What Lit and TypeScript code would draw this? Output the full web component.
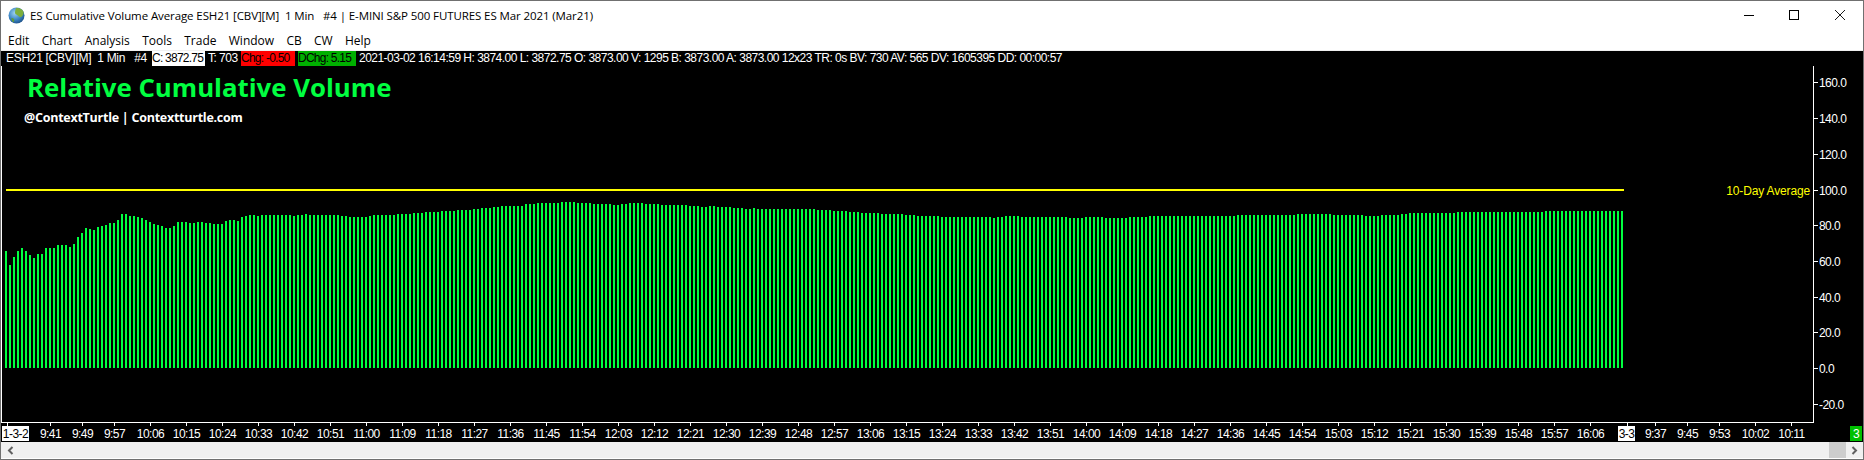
import { LitElement, css, html, svg } from "lit";
import { customElement } from "lit/decorators.js";

// tops of the first 93 bars, page pixels
const HEAD = [
  251, 265, 257, 251, 248, 251, 255, 258, 254, 254, 248, 248, 248, 245, 245, 245, 247, 244, 237, 233,
  228, 229, 230, 227, 226, 225, 223, 223, 220, 214, 214, 216, 216, 217, 218, 220, 222, 224, 225, 226,
  228, 228, 226, 222, 222, 222, 223, 223, 222, 222, 223, 223, 224, 224, 224, 221, 220, 220, 221, 217,
  216, 215, 215, 216, 215, 215, 215, 215, 215, 215, 215, 215, 216, 215, 215, 214, 215, 215, 215, 215,
  215, 215, 215, 215, 216, 216, 217, 217, 217, 217, 217, 216, 215,
];

// [bar x below which, top] for everything after HEAD
const RUNS: [number, number][] = [
  [395, 215], [410, 214], [425, 213], [440, 212], [455, 211], [470, 210], [480, 209], [490, 208],
  [500, 207], [524, 206], [536, 204], [560, 203], [576, 202], [590, 203], [613, 204], [620, 205],
  [627, 204], [644, 203], [660, 204], [687, 205], [700, 206], [708, 207], [716, 206], [733, 207],
  [743, 208], [751, 209], [755, 208], [815, 209], [831, 210], [848, 211], [861, 212], [881, 213],
  [904, 214], [917, 215], [940, 216], [992, 217], [996, 218], [1005, 217], [1019, 216], [1068, 217],
  [1084, 218], [1104, 217], [1127, 218], [1147, 217], [1235, 216], [1294, 215], [1333, 214],
  [1363, 215], [1380, 216], [1400, 215], [1409, 214], [1455, 213], [1544, 212], [1630, 211],
];

const BAR_BOTTOM = 368;
const BAR_COUNT = 405;

const barTop = (i: number, x: number) =>
  i < HEAD.length ? HEAD[i] : RUNS.find((r) => x < r[0])![1];

const Y_LABELS = [160, 140, 120, 100, 80, 60, 40, 20, 0, -20];
const yOf = (v: number) => 368 - (v / 20) * 35.7;

function timeLabels() {
  const out: { x: number; t: string }[] = [
    { x: 50, t: "9:41" },
    { x: 82, t: "9:49" },
    { x: 114, t: "9:57" },
  ];
  for (let k = 0; k <= 40; k++) {
    const m = 10 * 60 + 6 + k * 9;
    out.push({ x: 150 + k * 36, t: `${Math.floor(m / 60)}:${String(m % 60).padStart(2, "0")}` });
  }
  out.push(
    { x: 1655, t: "9:37" },
    { x: 1687, t: "9:45" },
    { x: 1719, t: "9:53" },
    { x: 1755, t: "10:02" },
    { x: 1791, t: "10:11" }
  );
  return out;
}

const MENU = ["Edit", "Chart", "Analysis", "Tools", "Trade", "Window", "CB", "CW", "Help"];

@customElement("app-root")
export class AppRoot extends LitElement {
  static styles = css`
    :host {
      display: block;
      width: 1864px;
      height: 460px;
      box-sizing: border-box;
      border: 1px solid #707070;
      background: #fff;
      overflow: hidden;
    }
    .titlebar {
      height: 29px;
      display: flex;
      align-items: center;
      padding-left: 7px;
      font: 11.5px "Open Sans", sans-serif;
      color: #000;
      white-space: pre;
    }
    .globe {
      width: 17px;
      height: 17px;
      margin-right: 5px;
    }
    .title-text {
      flex: 1;
      letter-spacing: -0.1px;
    }
    .winbtns {
      display: flex;
      gap: 33px;
      padding-right: 17px;
      margin-bottom: 1px;
    }
    .winbtns svg {
      display: block;
      width: 12px;
      height: 12px;
    }
    .winbtns svg.close {
      margin-left: 1px;
    }
    .menubar {
      height: 20px;
      display: flex;
      gap: 12.3px;
      padding-left: 7px;
      align-items: center;
      font: 12px "Open Sans", sans-serif;
      border-bottom: 1px solid #f0f0f0;
    }
    .chart {
      height: 391px;
      background: #000;
    }
    .status {
      height: 15px;
      display: flex;
      gap: 3px;
      align-items: center;
      padding-left: 5px;
      font: 12px "Liberation Sans", sans-serif;
      letter-spacing: -0.52px;
      color: #fff;
      white-space: pre;
    }
    .status span {
      height: 15px;
      line-height: 15px;
    }
    .cell-name {
      width: 143px;
      letter-spacing: -0.3px;
    }
    .cell-white {
      width: 53px;
      background: #fff;
      color: #000;
      letter-spacing: -0.75px;
    }
    .cell-t {
      width: 30px;
    }
    .cell-red {
      width: 54px;
      background: #ff0000;
      color: #000;
      letter-spacing: -0.75px;
    }
    .cell-green {
      width: 58px;
      background: #00b000;
      color: #000;
      letter-spacing: -0.75px;
    }
    .plot {
      display: block;
      width: 1862px;
      height: 376px;
    }
    .plot text {
      font: 12px "Liberation Sans", sans-serif;
      letter-spacing: -0.55px;
      fill: #fff;
    }
    .plot text.center {
      text-anchor: middle;
    }
    .plot text.heading {
      font: bold 25.8px "Open Sans", sans-serif;
      letter-spacing: 0;
      fill: #00ff40;
    }
    .plot text.sub {
      font: bold 12.5px "Open Sans", sans-serif;
      letter-spacing: -0.25px;
      fill: #fff;
    }
    .plot text.avg {
      letter-spacing: -0.15px;
      fill: #ffff00;
      text-anchor: end;
    }
    .plot text.dark {
      fill: #000;
    }
    .scrollbar {
      height: 16px;
      background: #f0f0f0;
      display: flex;
      align-items: center;
      justify-content: space-between;
    }
    .arrow {
      display: block;
      width: 9px;
      height: 9px;
      margin-left: 5px;
    }
    .scroll-end {
      display: flex;
      align-items: center;
    }
    .thumb {
      width: 17px;
      height: 16px;
      background: #cdcdcd;
    }
    .scroll-end .arrow {
      margin: 0 4px 0 4px;
    }
  `;

  private renderPlot() {
    const bars = [];
    for (let i = 0; i < BAR_COUNT; i++) {
      const x = 5 + i * 4;
      const top = barTop(i, x);
      bars.push(svg`<rect x=${x} y=${top} width="2" height=${BAR_BOTTOM - top} fill="#00ff40"></rect>`);
    }
    const times = timeLabels();
    return html`
      <svg class="plot" viewBox="1 66 1862 376">
        <rect x="1" y="66" width="1" height="357" fill="#fff"></rect>
        <rect x="1" y="422" width="1813" height="1" fill="#fff"></rect>
        <rect x="1813" y="51" width="1" height="372" fill="#fff"></rect>
        ${bars}
        <rect x="6" y="189" width="1618" height="2" fill="#ffff00"></rect>
        <text class="heading" x="27" y="97">Relative Cumulative Volume</text>
        <text class="sub" x="24" y="122">@ContextTurtle | Contextturtle.com</text>
        <text class="avg" x="1810" y="195">10-Day Average</text>
        ${Y_LABELS.map((v) => {
          const y = Math.round(yOf(v));
          return svg`
            <rect x="1814" y=${y} width="4" height="1" fill="#fff"></rect>
            <text x="1819" y=${y + 5}>${v.toFixed(1)}</text>`;
        })}
        ${times.map(
          (l) => svg`
            <rect x=${l.x} y="423" width="1" height="3" fill="#fff"></rect>
            <text class="center" x=${l.x + 0.5} y="438">${l.t}</text>`
        )}
        <rect x="7" y="423" width="1" height="3" fill="#fff"></rect>
        <rect x="2" y="426" width="27" height="15" fill="#fff"></rect>
        <text class="center dark" x="15.5" y="438">1-3-2</text>
        <rect x="1627" y="423" width="1" height="3" fill="#fff"></rect>
        <rect x="1618" y="426" width="17" height="15" fill="#fff"></rect>
        <text class="center dark" x="1626.5" y="438">3-3</text>
        <rect x="1850" y="426" width="12" height="15" fill="#00c000"></rect>
        <text class="center" x="1856" y="438">3</text>
      </svg>
    `;
  }

  render() {
    return html`
      <div class="titlebar">
        <svg class="globe" viewBox="0 0 17 17">
          <defs>
            <radialGradient id="sea" cx="0.4" cy="0.35" r="0.7">
              <stop offset="0" stop-color="#9fd4f2"></stop>
              <stop offset="0.6" stop-color="#3a84c4"></stop>
              <stop offset="1" stop-color="#1c4f86"></stop>
            </radialGradient>
          </defs>
          <circle cx="8.5" cy="8.5" r="8" fill="url(#sea)"></circle>
          <path d="M8 1.2c3 -.6 6 .8 7.4 3.4c.6 2 -.4 4.4 -2.2 5.4c-1.6 .6 -2.2 -1 -3.4 -1.6c-1.4 -.8 -3 -1.4 -2.8 -3.2c.1 -1.4 .4 -2.8 1 -4z" fill="#7dae3c"></path>
          <path d="M3.4 11c1.2 -.4 2.4 .4 2.8 1.6c.2 1.2 -.2 2.2 -.8 2.6c-1.2 -.6 -2 -2.4 -2 -4.2z" fill="#5f9a3a"></path>
        </svg>
        <div class="title-text">ES Cumulative Volume Average ESH21 [CBV][M]  1 Min   #4 | E-MINI S&amp;P 500 FUTURES ES Mar 2021 (Mar21)</div>
        <div class="winbtns">
          <svg viewBox="0 0 12 12"><path d="M1 6.5h10" stroke="#000" fill="none"></path></svg>
          <svg viewBox="0 0 12 12"><rect x="1.5" y="1.5" width="9" height="9" stroke="#000" fill="none"></rect></svg>
          <svg class="close" viewBox="0 0 12 12"><path d="M1 1l10 10M11 1l-10 10" stroke="#000" stroke-width="0.9" fill="none"></path></svg>
        </div>
      </div>
      <div class="menubar">${MENU.map((m) => html`<span>${m}</span>`)}</div>
      <div class="chart">
        <div class="status">
          <span class="cell-name">ESH21 [CBV][M]  1 Min   #4</span>
          <span class="cell-white">C: 3872.75</span>
          <span class="cell-t">T: 703</span>
          <span class="cell-red">Chg: -0.50</span>
          <span class="cell-green">DChg: 5.15</span>
          <span>2021-03-02 16:14:59 H: 3874.00 L: 3872.75 O: 3873.00 V: 1295 B: 3873.00 A: 3873.00 12x23 TR: 0s BV: 730 AV: 565 DV: 1605395 DD: 00:00:57</span>
        </div>
        ${this.renderPlot()}
      </div>
      <div class="scrollbar">
        <svg class="arrow" viewBox="0 0 9 9"><path d="M6.5 1L3 4.5L6.5 8" stroke="#606060" stroke-width="2" fill="none"></path></svg>
        <div class="scroll-end">
          <div class="thumb"></div>
          <svg class="arrow" viewBox="0 0 9 9"><path d="M2.5 1L6 4.5L2.5 8" stroke="#606060" stroke-width="2" fill="none"></path></svg>
        </div>
      </div>
    `;
  }
}
